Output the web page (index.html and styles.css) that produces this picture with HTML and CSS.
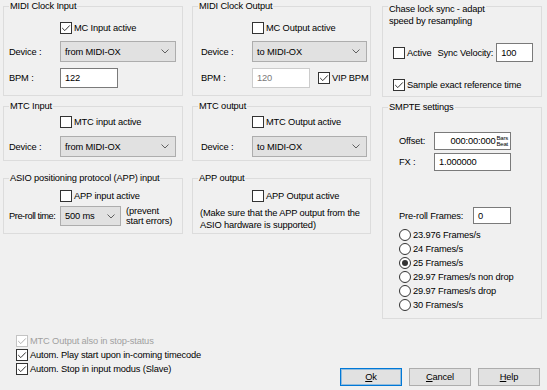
FILE: index.html
```html
<!DOCTYPE html>
<html>
<head>
<meta charset="utf-8">
<link rel="stylesheet" href="styles.css">
</head>
<body>
<div class="dlg">
  <div class="main">
    <div class="grid">
      <!-- MIDI Clock Input -->
      <div class="group g1">
        <span class="legend">MIDI Clock Input</span>
        <label class="chk ind"><span class="box"><svg viewBox="0 0 10 10"><path d="M1.2 5 L3.8 7.6 L8.8 2.4"/></svg></span>MC Input active</label>
        <div class="field f-sel"><span class="lbl">Device :</span><div class="combo w116"><span>from MIDI-OX</span><svg class="chev" viewBox="0 0 8 5"><path d="M0.5 0.5 L4 4 L7.5 0.5"/></svg></div></div>
        <div class="field f-bpm"><span class="lbl">BPM :</span><div class="edit w58">122</div></div>
      </div>
      <!-- MIDI Clock Output -->
      <div class="group g1 g2">
        <span class="legend">MIDI Clock Output</span>
        <label class="chk ind"><span class="box"></span>MC Output active</label>
        <div class="field f-sel"><span class="lbl">Device :</span><div class="combo w115"><span>to MIDI-OX</span><svg class="chev" viewBox="0 0 8 5"><path d="M0.5 0.5 L4 4 L7.5 0.5"/></svg></div></div>
        <div class="field f-bpm"><span class="lbl">BPM :</span><div class="edit w58 dis">120</div><label class="chk vip"><span class="box"><svg viewBox="0 0 10 10"><path d="M1.2 5 L3.8 7.6 L8.8 2.4"/></svg></span>VIP BPM</label></div>
      </div>
      <!-- MTC Input -->
      <div class="group g4">
        <span class="legend">MTC Input</span>
        <label class="chk ind"><span class="box"></span>MTC input active</label>
        <div class="field f-sel2"><span class="lbl">Device :</span><div class="combo w116"><span>from MIDI-OX</span><svg class="chev" viewBox="0 0 8 5"><path d="M0.5 0.5 L4 4 L7.5 0.5"/></svg></div></div>
      </div>
      <!-- MTC output -->
      <div class="group g4 g2">
        <span class="legend">MTC output</span>
        <label class="chk ind"><span class="box"></span>MTC Output active</label>
        <div class="field f-sel2"><span class="lbl">Device :</span><div class="combo w115"><span>to MIDI-OX</span><svg class="chev" viewBox="0 0 8 5"><path d="M0.5 0.5 L4 4 L7.5 0.5"/></svg></div></div>
      </div>
      <!-- ASIO -->
      <div class="group g6">
        <span class="legend">ASIO positioning protocol (APP) input</span>
        <label class="chk ind"><span class="box"></span>APP input active</label>
        <div class="field f-pre"><span class="lbl tight">Pre-roll time:</span><div class="combo w61"><span>500 ms</span><svg class="chev" viewBox="0 0 8 5"><path d="M0.5 0.5 L4 4 L7.5 0.5"/></svg></div><span class="note">(prevent<br>start errors)</span></div>
      </div>
      <!-- APP output -->
      <div class="group g6 g7">
        <span class="legend">APP output</span>
        <label class="chk ind7"><span class="box"></span>APP Output active</label>
        <p class="info">(Make sure that the APP output from the<br>ASIO hardware is supported)</p>
      </div>
    </div>
    <div class="col3">
      <div class="group g3">
        <span class="legend two">Chase lock sync - adapt<br>speed by resampling</span>
        <div class="field f-act"><label class="chk"><span class="box"></span>Active</label><span class="sv">Sync Velocity:</span><div class="edit w37">100</div></div>
        <label class="chk f-samp"><span class="box"><svg viewBox="0 0 10 10"><path d="M1.2 5 L3.8 7.6 L8.8 2.4"/></svg></span>Sample exact reference time</label>
      </div>
      <div class="group g8">
        <span class="legend">SMPTE settings</span>
        <div class="field f-off"><span class="lbl2">Offset:</span><div class="edit w77 off"><span>000:00:000</span><span class="bb">Bars<br>Beat</span></div></div>
        <div class="field f-fx"><span class="lbl2">FX :</span><div class="edit w77 h18">1.000000</div></div>
        <div class="field f-prf"><span class="lbl3">Pre-roll Frames:</span><div class="edit w38 h17">0</div></div>
        <div class="radios">
          <label class="rad"><span class="rb"></span>23.976 Frames/s</label>
          <label class="rad"><span class="rb"></span>24 Frames/s</label>
          <label class="rad"><span class="rb on"></span>25 Frames/s</label>
          <label class="rad"><span class="rb"></span>29.97 Frames/s non drop</label>
          <label class="rad"><span class="rb"></span>29.97 Frames/s drop</label>
          <label class="rad"><span class="rb"></span>30 Frames/s</label>
        </div>
      </div>
    </div>
  </div>
  <div class="bottom">
    <div class="opts">
      <label class="chk row dis"><span class="box"><svg viewBox="0 0 10 10"><path d="M1.2 5 L3.8 7.6 L8.8 2.4"/></svg></span>MTC Output also in stop-status</label>
      <label class="chk row"><span class="box"><svg viewBox="0 0 10 10"><path d="M1.2 5 L3.8 7.6 L8.8 2.4"/></svg></span>Autom. Play start upon in-coming timecode</label>
      <label class="chk row"><span class="box"><svg viewBox="0 0 10 10"><path d="M1.2 5 L3.8 7.6 L8.8 2.4"/></svg></span>Autom. Stop in input modus (Slave)</label>
    </div>
    <div class="btns">
      <div class="btn def"><u>O</u>k</div>
      <div class="btn"><u>C</u>ancel</div>
      <div class="btn"><u>H</u>elp</div>
    </div>
  </div>
</div>
</body>
</html>
```

FILE: styles.css
```css
* { box-sizing: border-box; }
html, body { margin: 0; padding: 0; }
body {
  width: 547px;
  height: 390px;
  overflow: hidden;
  background: #f0f0f0;
  font-family: "Liberation Sans", Arial, sans-serif;
  font-size: 9.3px;
  letter-spacing: -0.15px;
  color: #000;
}
.dlg { display: flex; flex-direction: column; }
.main { display: flex; padding: 6px 0 0 3px; }
.grid {
  display: grid;
  grid-template-columns: 180px 179px;
  grid-template-rows: 90px 55px 63px;
  column-gap: 9px;
  row-gap: 10px;
}
.grid .g6 { margin-top: 7px; }
.col3 { display: flex; flex-direction: column; gap: 10px; margin-left: 11px; width: 160px; }

.group { position: relative; border: 1px solid #dcdcdc; padding-left: 5px; }
.g2 { padding-left: 8px; }
.legend {
  position: absolute;
  top: -7px;
  left: 5px;
  padding: 0 1px;
  background: #f0f0f0;
  line-height: 12px;
  white-space: nowrap;
}
.legend.two { white-space: normal; top: -4px; }

.chk { display: flex; align-items: center; height: 12px; gap: 2px; white-space: nowrap; }
.box {
  width: 12px; height: 12px; flex: none;
  border: 1px solid #333; background: #fff;
  display: flex; align-items: center; justify-content: center;
}
.box svg { width: 10px; height: 10px; }
.box path { fill: none; stroke: #333; stroke-width: 1; }
.ind { margin-left: 51px; }

.field { display: flex; align-items: center; }
.lbl { width: 51px; flex: none; white-space: nowrap; }
.lbl.tight { letter-spacing: -0.45px; }
.combo {
  height: 21px;
  background: #e1e1e1;
  border: 1px solid #adadad;
  display: flex; align-items: center; justify-content: space-between;
  padding: 0 6px 0 4px;
}
.chev { width: 8px; height: 5px; }
.chev path { fill: none; stroke: #606060; stroke-width: 1; }
.w116 { width: 116px; }
.w115 { width: 115px; }
.w61 { width: 61px; height: 20px; padding-right: 5px; }
.edit {
  height: 20px;
  background: #fff;
  border: 1px solid #7a7a7a;
  padding-left: 4px;
  display: flex; align-items: center;
}
.edit.dis { border-color: #cccccc; color: #7a7a7a; }
.w58 { width: 58px; }
.w37 { width: 37px; height: 19px; margin-left: 3px; }
.w77 { width: 77px; height: 18px; }
.w38 { width: 38px; }
.h18 { height: 18px; }
.h17 { height: 17px; }

/* MIDI clock groups */
.g1 { padding-top: 15px; }
.g1 .f-sel { margin-top: 7px; }
.g1 .f-bpm { margin-top: 6px; }
.vip { margin-left: 8px; }

/* MTC groups */
.g4 { padding-top: 9px; }
.g4 .f-sel2 { margin-top: 8px; }

/* ASIO */
.g6 { padding-top: 11px; }
.g6 .f-pre { margin-top: 4px; }
.note { margin-left: 5px; line-height: 10px; }
.g7 { padding-left: 7px; }
.ind7 { margin-left: 52px; }
.info { margin: 5px 0 0 0; line-height: 12px; }

/* chase */
.g3 { height: 91px; padding: 36px 0 0 10px; }
.f-act { height: 19px; }
.sv { margin-left: 6px; }
.f-samp { margin-top: 17px; }

/* SMPTE */
.g8 { height: 212px; padding: 24px 0 0 16px; }
.lbl2 { width: 35px; flex: none; }
.lbl3 { width: 74px; flex: none; }
.off { justify-content: flex-end; padding: 0 2px 0 0; gap: 1px; }
.bb { font-size: 6px; line-height: 6px; letter-spacing: -0.2px; }
.f-fx { margin-top: 3px; }
.f-prf { margin-top: 36px; }
.radios { display: flex; flex-direction: column; margin-top: 4px; }
.rad { display: flex; align-items: center; gap: 2px; height: 14px; }
.rb {
  width: 12px; height: 12px; flex: none;
  border: 1px solid #333; border-radius: 50%; background: #fff;
  display: flex; align-items: center; justify-content: center;
}
.rb.on::after { content: ""; width: 6px; height: 6px; border-radius: 50%; background: #333; }

/* bottom */
.bottom { display: flex; margin-top: 15px; padding: 0 7px 0 16px; }
.opts { display: flex; flex-direction: column; }
.row { height: 14px; }
.row.dis { color: #a0a0a0; }
.row.dis .box { border-color: #c4c4c4; }
.row.dis .box path { stroke: #b0b0b0; }
.btns { display: flex; gap: 7px; margin-left: auto; margin-top: 34px; }
.btn {
  width: 62px; height: 18px;
  background: #e1e1e1;
  border: 1px solid #adadad;
  display: flex; align-items: center; justify-content: center;
}
.btn.def { border-color: #0078d7; box-shadow: inset 0 0 0 1px rgba(0,120,215,0.35); }
```
